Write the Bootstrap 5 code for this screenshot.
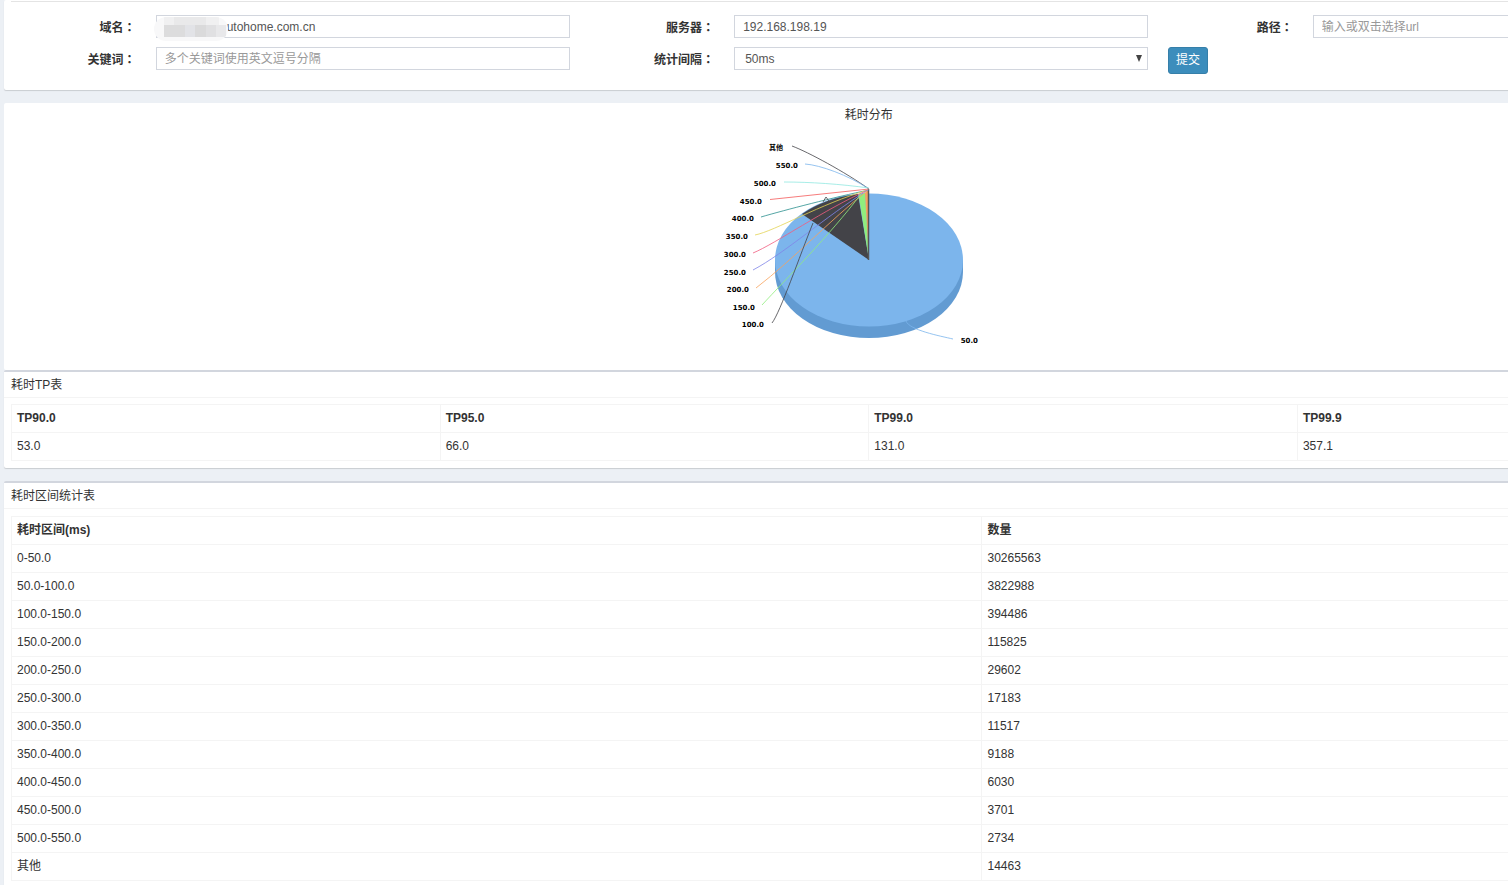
<!DOCTYPE html>
<html lang="zh-CN">
<head>
<meta charset="utf-8">
<meta name="viewport" content="width=device-width, initial-scale=1">
<title>耗时分布</title>
<link href="https://cdn.jsdelivr.net/npm/bootstrap@5.3.0/dist/css/bootstrap.min.css" rel="stylesheet">
<style>
  body { font-family: "Liberation Sans", "Noto Sans CJK SC", sans-serif; font-size: 12px; line-height: 17px; color: #333; background: #ecf0f5; }
  .viewport { padding-left: 4px; overflow: hidden; height: 100vh; }
  .wide { width: 115%; }
  .panel { background: #fff; border-radius: 2px; box-shadow: 0 1px 1px rgba(0,0,0,.15); margin-bottom: 13px; }
  .panel-line { border-top: 2px solid #d2d6de; }
  .panel-title { height: 26px; padding: 5px 7px; border-bottom: 1px solid #f4f4f4; margin: 0; font-size: 12px; line-height: 17px; font-weight: 400; color: #333; }
  .panel-content { padding: 6px 7px 7px; }
  .panel-content.roomy { padding-top: 7px; }
  .filters { padding: 1px 7px 16px; }
  .filters hr { margin: 0 0 13px; border-top: 1px solid #e4e4e4; opacity: 1; }
  .filters .row { --bs-gutter-x: 20px; row-gap: 9px; }
  .filters label { font-weight: 700; padding-top: 3px; text-align: right; }
  .colon { font-family: "Noto Sans CJK JP", sans-serif; }
  .filters .form-control, .filters .form-select { height: 23px; min-height: 0; padding: 0 8px; font-size: 12px; line-height: 17px; color: #555; border: 1px solid #d2d6de; border-radius: 0; }
  .filters .form-control::placeholder { color: #999; }
  .filters .form-select { padding: 1px 8px 0 10px; background-image: url("data:image/svg+xml,%3Csvg xmlns='http://www.w3.org/2000/svg' viewBox='0 0 6 7'%3E%3Cpath fill='%23444' d='M0 0h6L3 7z'/%3E%3C/svg%3E"); background-size: 6px 7px; background-position: right 5px center; }
  .filters .masked { padding-left: 70px; }
  .mosaic { position: absolute; left: 8px; top: 2px; width: 74px; height: 24px; border-radius: 12px; background: #f8f8f9; overflow: hidden; }
  .btn-send { height: 27px; padding: 0 7px; font-size: 12px; line-height: 17px; color: #fff; background: #3c8dbc; border: 1px solid #367fa9; border-radius: 3px; }
  .chart { height: 267px; padding-top: 4px; margin-bottom: 0; box-shadow: none; }
  .chart svg { display: block; margin: 6px auto 0; }
  .chart text { font: 700 7px "DejaVu Sans", "Noto Sans CJK SC", sans-serif; fill: #000; text-anchor: end; }
  .chart .lead-lines path { fill: none; stroke-width: 1; opacity: .8; }
  .panel .table { font-size: 12px; line-height: 17px; color: #333; border-color: #f4f4f4; margin: 0; table-layout: fixed; --bs-table-color: #333; }
  .panel .table > :not(caption) > * > * { padding: 5px; }
  .table .range { width: 56.6%; }
</style>
</head>
<body>
<div class="viewport">
<main class="wide">
  <form class="panel filters">
    <hr>
    <div class="row">
      <label class="col-1" for="domain">域名<span class="colon" lang="ja">：</span></label>
      <div class="col-3 position-relative">
        <input class="form-control masked" id="domain" type="text" value="utohome.com.cn">
        <svg class="mosaic" viewBox="0 0 74 24" aria-hidden="true">
          <path fill="#f0f0f1" d="M10 0h55v8H10z"/><path fill="#e9e9ea" d="M20 0h32v8H20z"/>
          <path fill="#dcdcdd" d="M10 8h21v12H10z"/><path fill="#e2e3e7" d="M31 8h10v12H31z"/>
          <path fill="#dadadb" d="M41 8h11v12H41z"/><path fill="#e0e0e2" d="M52 8h10v12H52z"/><path fill="#e8e8ea" d="M62 8h10v12H62z"/>
        </svg>
      </div>
      <label class="col-1" for="server">服务器<span class="colon" lang="ja">：</span></label>
      <div class="col-3"><input class="form-control" id="server" type="text" value="192.168.198.19"></div>
      <label class="col-1" for="path">路径<span class="colon" lang="ja">：</span></label>
      <div class="col-3"><input class="form-control" id="path" type="text" placeholder="输入或双击选择url"></div>
      <label class="col-1" for="keyword">关键词<span class="colon" lang="ja">：</span></label>
      <div class="col-3"><input class="form-control" id="keyword" type="text" placeholder="多个关键词使用英文逗号分隔"></div>
      <label class="col-1" for="step">统计间隔<span class="colon" lang="ja">：</span></label>
      <div class="col-3"><select class="form-select" id="step"><option>50ms</option><option>100ms</option></select></div>
      <div class="col-1"><button class="btn btn-send" type="button">提交</button></div>
    </div>
  </form>

  <section class="panel chart">
    <div class="text-center">耗时分布</div>
    <svg width="300" height="230" viewBox="719 130 300 230" role="img" aria-label="耗时分布">
      <path fill="#629bd2" d="M775 260v12a94 66 0 0 0 188 0v-12z"/>
      <ellipse cx="869" cy="260" rx="94" ry="66.500" fill="#7cb5ec"/>
      <path fill="#434348" d="M869 260L802 214Q825 198 858 194z"/>
      <path fill="#90ed7d" d="M869 260L858.500 194L865 193z"/>
      <path fill="#f7a35c" d="M869 260L865 193L868 190z"/>
      <path fill="none" stroke="#555" stroke-width="1.500" d="M868.500 260V189"/>
      <g class="lead-lines">
        <path stroke="#434348" d="M792 146C808 152 845 172 869 189"/>
        <path stroke="#7cb5ec" d="M805 164C820 165 848 175 869 189"/>
        <path stroke="#91e8e1" d="M784 182C810 182 840 184 869 188"/>
        <path stroke="#f45b5b" d="M770 199.500L869 189"/>
        <path stroke="#2b908f" d="M761 217C785 210 835 197 869 190"/>
        <path stroke="#e4d354" d="M755 235C775 231 820 204 868 190"/>
        <path stroke="#f15c80" d="M753 253C775 244 825 209 868 190"/>
        <path stroke="#8085e9" d="M753 270C785 253 825 217 868 190"/>
        <path stroke="#f7a35c" d="M756 288C795 258 830 220 867 191"/>
        <path stroke="#90ed7d" d="M762 305C785 280 830 235 861 194"/>
        <path stroke="#434348" d="M772 323C780 313 800 255 813 223M823 202l3-5l3 4"/>
        <path stroke="#7cb5ec" d="M906 321C909 330 940 336 953 339"/>
      </g>
      <text x="783" y="150">其他</text><text x="798" y="168">550.0</text><text x="776" y="186">500.0</text>
      <text x="762" y="204">450.0</text><text x="754" y="221">400.0</text><text x="748" y="239">350.0</text>
      <text x="746" y="257">300.0</text><text x="746" y="275">250.0</text><text x="749" y="292">200.0</text>
      <text x="755" y="310">150.0</text><text x="764" y="327">100.0</text><text x="978" y="343">50.0</text>
    </svg>
  </section>

  <section class="panel panel-line">
    <h2 class="panel-title">耗时TP表</h2>
    <div class="panel-content">
      <table class="table table-bordered">
        <thead><tr><th>TP90.0</th><th>TP95.0</th><th>TP99.0</th><th>TP99.9</th></tr></thead>
        <tbody><tr><td>53.0</td><td>66.0</td><td>131.0</td><td>357.1</td></tr></tbody>
      </table>
    </div>
  </section>

  <section class="panel panel-line">
    <h2 class="panel-title">耗时区间统计表</h2>
    <div class="panel-content roomy">
      <table class="table table-bordered">
        <thead><tr><th class="range">耗时区间(ms)</th><th>数量</th></tr></thead>
        <tbody>
          <tr><td>0-50.0</td><td>30265563</td></tr>
          <tr><td>50.0-100.0</td><td>3822988</td></tr>
          <tr><td>100.0-150.0</td><td>394486</td></tr>
          <tr><td>150.0-200.0</td><td>115825</td></tr>
          <tr><td>200.0-250.0</td><td>29602</td></tr>
          <tr><td>250.0-300.0</td><td>17183</td></tr>
          <tr><td>300.0-350.0</td><td>11517</td></tr>
          <tr><td>350.0-400.0</td><td>9188</td></tr>
          <tr><td>400.0-450.0</td><td>6030</td></tr>
          <tr><td>450.0-500.0</td><td>3701</td></tr>
          <tr><td>500.0-550.0</td><td>2734</td></tr>
          <tr><td>其他</td><td>14463</td></tr>
        </tbody>
      </table>
    </div>
  </section>
</main>
</div>
<script src="https://cdn.jsdelivr.net/npm/bootstrap@5.3.0/dist/js/bootstrap.bundle.min.js"></script>
</body>
</html>
